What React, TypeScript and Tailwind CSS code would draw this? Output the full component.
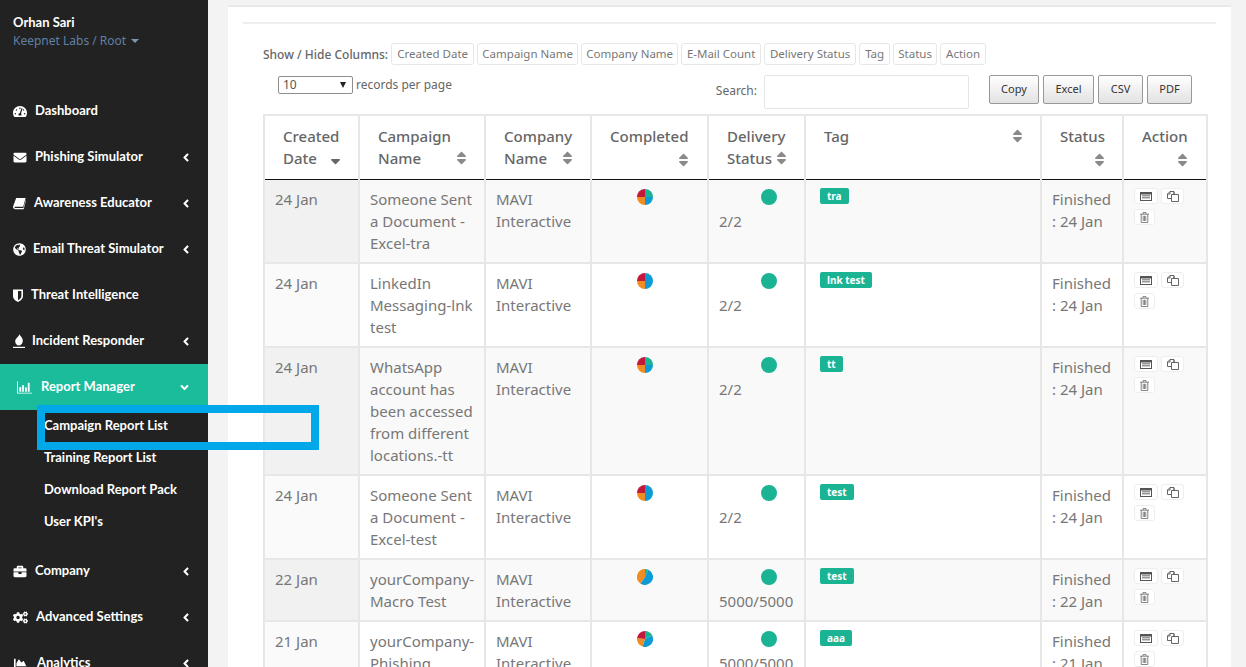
import {
  FaAngleDown,
  FaAngleLeft,
  FaBriefcase,
  FaChartArea,
  FaCogs,
  FaEnvelope,
  FaGlobeAmericas,
  FaSort,
  FaSortDown,
  FaTachometerAlt,
} from "react-icons/fa";
import type { ComponentType } from "react";

type IconProps = { className?: string };

function BookIcon({ className }: IconProps) {
  return (
    <svg viewBox="0 0 14 13" className={className} fill="currentColor">
      <path d="M3.4 0.5H13.6L11 10H2.4C1.7 10 1.5 10.6 1.8 11C2 11.3 2.3 11.4 2.7 11.4H11.2L13.8 2.6L14 3.2L11.6 12.2C11.5 12.6 11.2 12.8 10.8 12.8H2.4C1.2 12.8 0 11.8 0 10.4C0 10 0.1 9.7 0.2 9.4Z" />
    </svg>
  );
}

function ShieldIcon({ className }: IconProps) {
  return (
    <svg viewBox="0 0 10 13" className={className} fill="currentColor">
      <path
        fillRule="evenodd"
        d="M0 0.5H10V7C10 10 7.2 12 5 13C2.8 12 0 10 0 7ZM5 2V11.2C6.6 10.4 8.4 9 8.4 7V2Z"
      />
    </svg>
  );
}

function FlameIcon({ className }: IconProps) {
  return (
    <svg viewBox="0 0 12 14" className={className} fill="currentColor">
      <path d="M6.4 0C7 2 9.8 3.4 9.8 6.8C9.8 9.4 8.2 11.4 6 11.4C3.8 11.4 2.2 9.6 2.2 7.4C2.2 5.4 3.4 4.6 4.2 3.6C5 2.6 6.4 1.6 6.4 0Z" />
      <rect x="0" y="12.8" width="12" height="1.2" />
    </svg>
  );
}

function BarsIcon({ className }: IconProps) {
  return (
    <svg viewBox="0 0 16 13" className={className} fill="currentColor">
      <path d="M0 0H1V12H16V13H0Z" />
      <rect x="2.5" y="6" width="2" height="5" />
      <rect x="5.5" y="4" width="2" height="7" />
      <rect x="8.5" y="6.5" width="2" height="4.5" />
      <rect x="11.5" y="1.5" width="2" height="9.5" />
    </svg>
  );
}

function ListIcon({ className }: IconProps) {
  return (
    <svg viewBox="0 0 12 9" className={className} fill="currentColor">
      <path d="M0 0H12V9H0ZM1 2.4V8H11V2.4Z" fillRule="evenodd" />
      <rect x="2" y="3.4" width="8" height="0.9" />
      <rect x="2" y="5.4" width="8" height="0.9" />
    </svg>
  );
}

function FilesIcon({ className }: IconProps) {
  return (
    <svg viewBox="0 0 12 11" className={className} fill="none" stroke="currentColor" strokeWidth="0.9">
      <path d="M4 7.5H0.5V3L3 0.5H7V3" />
      <path d="M3 0.5V3H0.5" />
      <path d="M4.5 3.5H11.5V10.5H4.5Z" />
      <path d="M7 3.5V1" />
    </svg>
  );
}

function TrashIcon({ className }: IconProps) {
  return (
    <svg viewBox="0 0 9 11" className={className} fill="none" stroke="currentColor" strokeWidth="0.9">
      <path d="M0 2.2H9" />
      <path d="M3 2V0.6H6V2" />
      <path d="M1.2 2.2V10.5H7.8V2.2" />
      <path d="M3.2 3.8V9M4.5 3.8V9M5.8 3.8V9" />
    </svg>
  );
}

const NAV_TOP: { label: string; icon: ComponentType<IconProps>; size: string; gap: string; arrow: boolean }[] = [
  { label: "Dashboard", icon: FaTachometerAlt, size: "h-[13px] w-[14px]", gap: "gap-2", arrow: false },
  { label: "Phishing Simulator", icon: FaEnvelope, size: "h-[13px] w-[14px]", gap: "gap-2", arrow: true },
  { label: "Awareness Educator", icon: BookIcon, size: "h-[13px] w-[13px]", gap: "gap-2", arrow: true },
  { label: "Email Threat Simulator", icon: FaGlobeAmericas, size: "h-[13px] w-[13px]", gap: "gap-[7px]", arrow: true },
  { label: "Threat Intelligence", icon: ShieldIcon, size: "h-[13px] w-[10px]", gap: "gap-2", arrow: false },
  { label: "Incident Responder", icon: FlameIcon, size: "h-[14px] w-[12px]", gap: "gap-[7px]", arrow: true },
];

const NAV_BOTTOM: { label: string; icon: ComponentType<IconProps>; size: string; gap: string }[] = [
  { label: "Company", icon: FaBriefcase, size: "h-[13px] w-[14px]", gap: "gap-2" },
  { label: "Advanced Settings", icon: FaCogs, size: "h-[13px] w-[15px]", gap: "gap-2" },
  { label: "Analytics", icon: FaChartArea, size: "h-[13px] w-[15px]", gap: "gap-[9px]" },
];

const SUB_ITEMS = ["Campaign Report List", "Training Report List", "Download Report Pack", "User KPI's"];

const CHIPS = [
  { label: "Created Date", width: "w-[83px]" },
  { label: "Campaign Name", width: "w-[101px]" },
  { label: "Company Name", width: "w-[97px]" },
  { label: "E-Mail Count", width: "w-[80px]" },
  { label: "Delivery Status", width: "w-[92px]" },
  { label: "Tag", width: "w-[31px]" },
  { label: "Status", width: "w-[44px]" },
  { label: "Action", width: "w-[46px]" },
];

const EXPORTS = [
  { label: "Copy", width: "w-[50px]" },
  { label: "Excel", width: "w-[51px]" },
  { label: "CSV", width: "w-[45px]" },
  { label: "PDF", width: "w-[45px]" },
];

// pie slices run clockwise from the top: green, blue, orange, red
const ROWS = [
  { date: "24 Jan", name: "Someone Sent a Document - Excel-tra", pie: [25, 25, 25, 25], sent: "2/2", tag: "tra", done: "24 Jan" },
  { date: "24 Jan", name: "LinkedIn Messaging-lnk test", pie: [0, 50, 25, 25], sent: "2/2", tag: "lnk test", done: "24 Jan" },
  { date: "24 Jan", name: "WhatsApp account has been accessed from different locations.-tt", pie: [25, 25, 25, 25], sent: "2/2", tag: "tt", done: "24 Jan" },
  { date: "24 Jan", name: "Someone Sent a Document - Excel-test", pie: [0, 50, 25, 25], sent: "2/2", tag: "test", done: "24 Jan" },
  { date: "22 Jan", name: "yourCompany-Macro Test", pie: [7, 53, 40, 0], sent: "5000/5000", tag: "test", done: "22 Jan" },
  { date: "21 Jan", name: "yourCompany-Phishing Campaign", pie: [18, 37, 22, 23], sent: "5000/5000", tag: "aaa", done: "21 Jan" },
];

const PIE_COLORS = ["#1ab394", "#0d9bd8", "#f08c21", "#c4173c"];

function Pie({ values }: { values: number[] }) {
  let start = 0;
  return (
    <svg viewBox="0 0 16 16" className="h-4 w-4">
      {values.map((v, i) => {
        if (v === 0) return null;
        const a0 = (start / 100) * 2 * Math.PI;
        start += v;
        const a1 = (start / 100) * 2 * Math.PI;
        const d = `M8 8L${8 + 8 * Math.sin(a0)} ${8 - 8 * Math.cos(a0)}A8 8 0 ${v > 50 ? 1 : 0} 1 ${8 + 8 * Math.sin(a1)} ${8 - 8 * Math.cos(a1)}Z`;
        return <path key={i} d={d} fill={PIE_COLORS[i]} />;
      })}
    </svg>
  );
}

function Th({ children }: { children: React.ReactNode }) {
  return (
    <th className="border-2 border-b border-[#e7e7e7] border-b-[#111111] pl-[18px] pr-[17px] pt-[9px] pb-[10px] text-left align-top font-medium">
      {children}
    </th>
  );
}

function SortIcon() {
  return <FaSort className="inline-block h-4 w-[11px] text-[#8a8a8a]" />;
}

function SideLink({ icon: Icon, size, label, gap, arrow = true }: { icon: ComponentType<IconProps>; size: string; label: string; gap: string; arrow?: boolean }) {
  return (
    <a className={`flex h-[46px] items-center ${gap} pl-[13px] pr-[18px] font-['Lato',sans-serif] text-[13px] font-bold text-white`}>
      <Icon className={`${size} shrink-0`} />
      <span className="flex-1 whitespace-nowrap">{label}</span>
      {arrow && <FaAngleLeft className="h-[13px] w-[8px] text-white" />}
    </a>
  );
}

export default function App() {
  return (
    <div className="relative flex h-[667px] w-[1246px] overflow-hidden bg-[#f3f3f3] font-['Noto_Sans',sans-serif]">
      {/* sidebar */}
      <aside className="w-[208px] shrink-0 bg-[#222222]">
        <div className="h-[88px] pl-[13px] pt-[14px]">
          <p className="font-['Lato',sans-serif] text-[13px] leading-[17px] font-bold text-white">Orhan Sari</p>
          <p className="mt-px flex items-center gap-[5px] text-[12px] leading-[18px] text-[#5f80a3]">
            Keepnet Labs / Root
            <span className="border-x-[4px] border-t-[4px] border-x-transparent border-t-[#8096b0]" />
          </p>
        </div>
        <nav>
          {NAV_TOP.map((n) => (
            <SideLink key={n.label} {...n} />
          ))}
          <a className="flex h-[46px] items-center gap-[9px] bg-[#1abc9c] pl-[17px] pr-[19px] font-['Lato',sans-serif] text-[13px] font-bold text-white">
            <BarsIcon className="h-[13px] w-[15px]" />
            <span className="flex-1">Report Manager</span>
            <FaAngleDown className="h-[13px] w-[9px]" />
          </a>
          <ul className="pb-[10px]">
            {SUB_ITEMS.map((s) => (
              <li key={s} className="flex h-8 items-center pl-[44px] font-['Lato',sans-serif] text-[13px] font-bold text-white">
                {s}
              </li>
            ))}
          </ul>
          {NAV_BOTTOM.map((n) => (
            <SideLink key={n.label} {...n} />
          ))}
        </nav>
      </aside>

      {/* main */}
      <main className="flex-1 pl-5 pr-[15px] pt-[5px]">
        <div className="h-[700px] border-t-2 border-[#e9e9e9] bg-white px-[15px] pt-[15px]">
          <div className="h-[2px] bg-[#eeeeee]" />
          <div className="pl-[20px]">
            <div className="mt-[19px] flex items-center gap-[3px]">
              <span className="pt-[2px] text-xs font-medium text-[#666666]">Show / Hide Columns:</span>
              {CHIPS.map((c) => (
                <span key={c.label} className={`flex h-[22px] ${c.width} items-center justify-center whitespace-nowrap rounded-[3px] border border-[#e7e7e7] text-[11.5px] text-[#777777]`}>
                  {c.label}
                </span>
              ))}
            </div>
            <div className="mt-[10px] flex h-[39px] justify-between pr-[24px]">
              <div className="flex h-[19px] items-center gap-[3px] pl-[15px] pt-[1px] text-xs text-[#666666]">
                <span className="relative flex h-[18px] w-[75px] items-center rounded-[2px] border border-[#8e8e8e] pl-1 text-xs text-[#555555]">
                  10
                  <span className="absolute right-[6px] top-[5px] border-x-[3.5px] border-t-[6px] border-x-transparent border-t-[#222222]" />
                </span>
                records per page
              </div>
              <div className="flex items-start">
                <span className="mt-[8px] text-xs text-[#666666]">Search:</span>
                <span className="ml-[7px] h-[34px] w-[205px] rounded-[2px] border border-[#e5e6e7] bg-white" />
                <div className="ml-[20px] flex gap-[4px]">
                  {EXPORTS.map((b) => (
                    <button key={b.label} className={`h-[29px] ${b.width} rounded-[2px] border border-[#999999] bg-gradient-to-b from-white to-[#e2e2e2] text-[11px] text-[#333333]`}>
                      {b.label}
                    </button>
                  ))}
                </div>
              </div>
            </div>

            <table className="w-[943px] table-fixed border-collapse text-[15px] leading-[22px] text-[#777777]">
              <colgroup>
                <col className="w-[95px]" />
                <col className="w-[126px]" />
                <col className="w-[106px]" />
                <col className="w-[117px]" />
                <col className="w-[97px]" />
                <col className="w-[236px]" />
                <col className="w-[82px]" />
                <col className="w-[84px]" />
              </colgroup>
              <thead className="text-[#666666]">
                <tr>
                  <Th>Created<div className="flex items-center justify-between">Date <FaSortDown className="h-4 w-[11px] text-[#666666]" /></div></Th>
                  <Th>Campaign<div className="flex items-center justify-between">Name <SortIcon /></div></Th>
                  <Th>Company<div className="flex items-center justify-between">Name <SortIcon /></div></Th>
                  <Th><div className="inline-block text-right">Completed<div><SortIcon /></div></div></Th>
                  <Th>Delivery<div className="flex items-center justify-between">Status <SortIcon /></div></Th>
                  <Th><div className="flex items-center justify-between">Tag <SortIcon /></div></Th>
                  <Th><div className="inline-block text-right">Status<div><SortIcon /></div></div></Th>
                  <Th><div className="inline-block text-right">Action<div><SortIcon /></div></div></Th>
                </tr>
              </thead>
              <tbody>
                {ROWS.map((r, i) => {
                  const rowBg = i % 2 === 0 ? "bg-[#f9f9f9]" : "bg-white";
                  const td = `border-2 border-[#e7e7e7] px-[10px] py-2 align-top ${i === 0 ? "border-t-0" : ""}`;
                  return (
                    <tr key={i} className={rowBg}>
                      <td className={`${td} ${i % 2 === 0 ? "bg-[#f1f1f1]" : "bg-[#fafafa]"}`}>{r.date}</td>
                      <td className={td}>{r.name}</td>
                      <td className={td}>MAVI Interactive</td>
                      <td className={td}>
                        <div className="flex justify-center pr-[9px] pt-px">
                          <Pie values={r.pie} />
                        </div>
                      </td>
                      <td className={`${td} whitespace-nowrap`}>
                        <div className="flex pl-[42px] pt-px">
                          <span className="h-4 w-4 rounded-full bg-[#1ab394]" />
                        </div>
                        <div className="mt-[5px]">{r.sent}</div>
                      </td>
                      <td className={`${td} !px-[14px]`}>
                        <span className="inline-block h-4 rounded-[2px] bg-[#1ab394] px-[7px] align-top text-[10px] leading-4 font-bold text-white">
                          {r.tag}
                        </span>
                      </td>
                      <td className={td}>
                        Finished
                        <br />: {r.done}
                      </td>
                      <td className={td}>
                        <div className="flex flex-wrap gap-x-[3px] gap-y-[5px]">
                          <span className="flex h-4 w-6 items-center justify-center rounded-[3px] border border-[#eeeeee] bg-white">
                            <ListIcon className="h-[9px] w-3 text-[#555555]" />
                          </span>
                          <span className="flex h-4 w-[23px] items-center justify-center rounded-[3px] border border-[#eeeeee] bg-white">
                            <FilesIcon className="h-[11px] w-3 text-[#555555]" />
                          </span>
                          <span className="flex h-4 w-[21px] items-center justify-center rounded-[3px] border border-[#eeeeee] bg-white">
                            <TrashIcon className="h-[11px] w-[9px] text-[#777777]" />
                          </span>
                        </div>
                      </td>
                    </tr>
                  );
                })}
              </tbody>
            </table>
          </div>
        </div>
      </main>

      {/* highlight box drawn over the page */}
      <div className="absolute left-[37px] top-[405px] h-[45px] w-[282px] border-[8px] border-[#00a7e9]" />
    </div>
  );
}
